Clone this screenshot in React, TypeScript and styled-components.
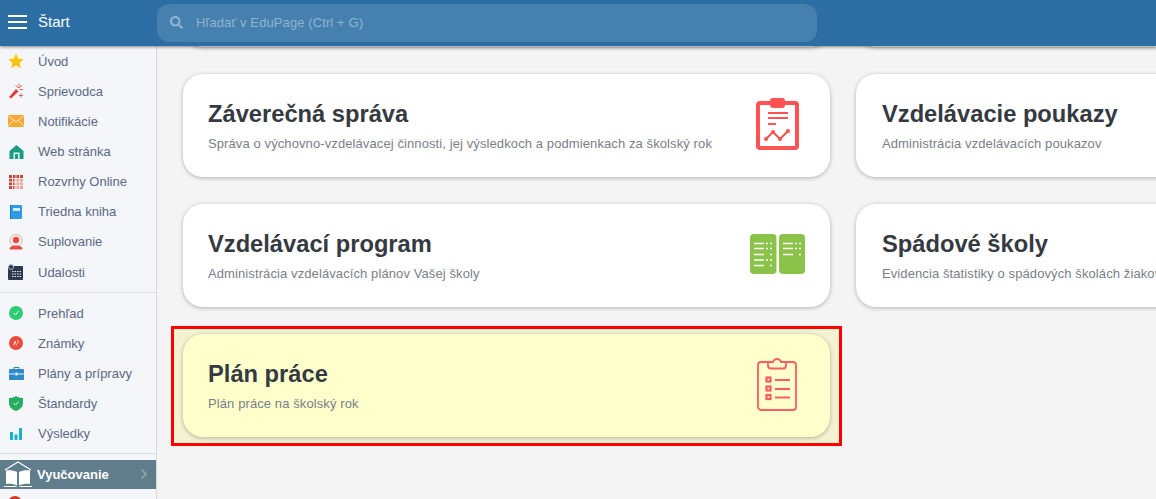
import React from "react";
import styled, { createGlobalStyle } from "styled-components";
import { FaSearch, FaChevronRight } from "react-icons/fa";

const GlobalStyle = createGlobalStyle`
  html, body {
    margin: 0;
    height: 100%;
    overflow: hidden;
    background: #f4f4f4;
    font-family: "Liberation Sans", Arial, sans-serif;
  }
`;

const Page = styled.div`
  width: 1156px;
  height: 499px;
  display: flex;
  flex-direction: column;
  overflow: hidden;
`;

const Header = styled.header`
  height: 46px;
  flex: none;
  display: flex;
  align-items: center;
  background: #2c6ea3;
  box-shadow: 0 1px 3px rgba(0, 0, 0, 0.45);
  position: relative;
  z-index: 3;
`;

const Brand = styled.div`
  width: 157px;
  flex: none;
  display: flex;
  align-items: center;
  gap: 11px;
  padding: 0 0 3px 8px;
  box-sizing: border-box;
  color: #fff;
  font-size: 15px;
`;

const Burger = styled.div`
  width: 19px;
  height: 14px;
  display: flex;
  flex-direction: column;
  justify-content: space-between;
  span {
    display: block;
    height: 2px;
    background: #fff;
  }
`;

const Search = styled.div`
  width: 660px;
  height: 38px;
  display: flex;
  align-items: center;
  gap: 13px;
  padding: 0 0 2px 13px;
  box-sizing: border-box;
  background: #4580ae;
  border-radius: 12px;
  color: #8fb5d2;
  font-size: 13px;
  letter-spacing: 0.1px;
`;

const Body = styled.div`
  flex: 1;
  min-height: 0;
  display: flex;
`;

const Sidebar = styled.nav`
  width: 157px;
  flex: none;
  box-sizing: border-box;
  background: #f5f6f9;
  border-right: 1px solid #d8d8d8;
  overflow: hidden;
`;

const NavItem = styled.div`
  height: 30.15px;
  display: flex;
  align-items: center;
  color: #5b6885;
  font-size: 13px;
`;

const NavIcon = styled.span`
  width: 38px;
  flex: none;
  display: flex;
  justify-content: center;
  padding-right: 6px;
  box-sizing: border-box;
  svg {
    display: block;
  }
`;

const Divider = styled.div`
  height: 1px;
  margin: 4.5px 0 5.5px;
  background: #dcdee2;
`;

const ActiveItem = styled.div`
  height: 29px;
  display: flex;
  align-items: center;
  background: #607d8b;
  color: #fff;
  font-size: 13px;
  font-weight: 700;
  svg.book {
    flex: none;
    margin: 0 4px 0 3px;
  }
  svg.chevron {
    margin-left: auto;
    margin-right: 6px;
    color: #8aa0ab;
  }
`;

const PeekDot = styled.div`
  width: 14px;
  height: 14px;
  margin: 7px 0 0 8px;
  border-radius: 50%;
  background: #d9342b;
`;

const Main = styled.main`
  flex: 1;
  min-width: 0;
  overflow: hidden;
`;

const CardGrid = styled.div`
  position: relative;
  z-index: 0;
  width: 1320px;
  margin: -102px 0 0 26px;
  display: grid;
  grid-template-columns: 647px 647px;
  grid-auto-rows: 103px;
  column-gap: 26px;
  row-gap: 27px;
`;

const Card = styled.div<{ $highlight?: boolean }>`
  position: relative;
  display: flex;
  align-items: center;
  justify-content: space-between;
  padding: 0 23px 0 25px;
  box-sizing: border-box;
  border-radius: 20px;
  background: ${(p) => (p.$highlight ? "#ffffcc" : "#fff")};
  box-shadow: 0 1px 4px rgba(0, 0, 0, 0.28);
  &:nth-child(even) {
    padding-left: 26px;
  }
  ${(p) =>
    p.$highlight &&
    `
    &::before {
      content: "";
      position: absolute;
      left: -12px;
      right: -12px;
      top: -8px;
      bottom: -9px;
      border: 3px solid #f00;
      background: #f3f3d2;
      z-index: -1;
    }
  `}
`;

const CardText = styled.div`
  display: flex;
  flex-direction: column;
  gap: 8px;
  min-width: 0;
  white-space: nowrap;
`;

const CardTitle = styled.div`
  color: #353a42;
  font-size: 23.7px;
  line-height: 28px;
  font-weight: 700;
`;

const CardDesc = styled.div`
  color: #7a8089;
  font-size: 13px;
  letter-spacing: 0.1px;
  line-height: 16px;
`;

const CardIcon = styled.div`
  width: 60px;
  flex: none;
  margin-top: -3px;
  display: flex;
  justify-content: center;
  svg {
    display: block;
  }
`;

const Star = () => (
  <svg width="16" height="16" viewBox="0 0 16 16"><path d="M8 .6l2.3 4.9 5.3.7-3.900 3.700 1 5.300L8 12.600l-4.700 2.600 1-5.300L.4 6.200l5.300-.7z" fill="#f8c513" /></svg>
);
const Wand = () => (
  <svg width="16" height="16" viewBox="0 0 16 16"><path d="M1 14l7-8 2.500 2.500L3 15.500z" fill="#e0403c" /><path d="M11 .5v3M7.500 2.500L11 5l3-3M15 6.500h-3.500M13 10.500v4M11 12.500h4" stroke="#e0605c" strokeWidth="1" fill="none" /></svg>
);
const Mail = () => (
  <svg width="16" height="12" viewBox="0 0 16 12"><rect width="16" height="12" fill="#f7a834" /><path d="M0 .5L8 7l8-6.500M0 11.500L5.500 5.500M16 11.500L10.500 5.500" stroke="#fdeccf" strokeWidth="1" fill="none" /></svg>
);
const Home = () => (
  <svg width="15" height="15" viewBox="0 0 15 15"><path d="M7.500 1L14.500 7V15H0.500V7z" fill="#1a9c83" /><rect x="4.500" y="8.500" width="6" height="6.500" fill="#eaf6f3" /><rect x="6" y="10" width="3" height="5" fill="#1a9c83" /></svg>
);
const Timetable = () => (
  <svg width="14" height="14" viewBox="0 0 14 14"><rect width="14" height="14" fill="#e8a9a3" /><rect width="5" height="14" fill="#c8453c" /><rect width="14" height="3" fill="#c8453c" /><path d="M0 3.500h14M0 7h14M0 10.500h14M3.500 0v14M7 0v14M10.500 0v14" stroke="#f7e4e2" strokeWidth="1" /></svg>
);
const Notebook = () => (
  <svg width="12" height="14" viewBox="0 0 12 14"><rect width="12" height="14" rx="1" fill="#2e9be6" /><rect x="3" y="3" width="7" height="3" fill="#d3ebfb" /><rect width="1" height="14" fill="#1c78b8" /></svg>
);
const Person = () => (
  <svg width="16" height="16" viewBox="0 0 16 16"><circle cx="8" cy="6.500" r="6" fill="none" stroke="#f0a89f" strokeWidth="1" /><circle cx="8" cy="6" r="3.200" fill="#ea4c3c" /><path d="M1.500 15.500c0-3 3-4 6.500-4s6.500 1 6.500 4z" fill="#ea4c3c" /></svg>
);
const Calendar = () => (
  <svg width="16" height="16" viewBox="0 0 16 16"><rect y="2" width="15" height="14" rx="1" fill="#2b3a4e" /><path d="M4 7.500h9M4 10h9M4 12.500h9" stroke="#e5e9ee" strokeWidth="1.200" strokeDasharray="1.500 1" /><circle cx="3" cy="3" r="2.500" fill="#2b3a4e" stroke="#c5ccd6" strokeWidth=".8" /></svg>
);
const Check = () => (
  <svg width="14" height="14" viewBox="0 0 14 14"><circle cx="7" cy="7" r="7" fill="#2ecc71" /><path d="M4.500 7l2 2 3-4" stroke="#e8f9ef" strokeWidth="1" fill="none" /></svg>
);
const Grades = () => (
  <svg width="14" height="14" viewBox="0 0 14 14"><circle cx="7" cy="7" r="7" fill="#ea4c3c" /><path d="M4.500 9.500L6 5l1.500 4.500M9 4.500v3" stroke="#fbd5d0" strokeWidth="1" fill="none" /></svg>
);
const Briefcase = () => (
  <svg width="15" height="13" viewBox="0 0 15 13"><path d="M5 2V.500h5V2" stroke="#2980b9" fill="none" /><rect y="2" width="15" height="11" rx="1" fill="#2d8ac7" /><rect y="6.500" width="15" height="1" fill="#e8f2f9" /><rect x="6.500" y="5.500" width="2" height="3" fill="#e8f2f9" /></svg>
);
const Shield = () => (
  <svg width="14" height="15" viewBox="0 0 14 15"><path d="M7 0c2 1.500 4 2 7 2v5c0 4-3 6.500-7 8-4-1.500-7-4-7-8V2c3 0 5-.5 7-2z" fill="#27ae60" /><path d="M4.500 7l2 2 3-3.500" stroke="#dff5e8" strokeWidth="1" fill="none" /></svg>
);
const Bars = () => (
  <svg width="12" height="12" viewBox="0 0 12 12"><rect y="4" width="3" height="8" fill="#17b3cf" /><rect x="4.500" y="6.500" width="3" height="5.500" fill="#17b3cf" /><rect x="9" width="3" height="12" fill="#17b3cf" /></svg>
);
const OpenBook = () => (
  <svg className="book" width="30" height="27" viewBox="0 0 30 27"><path d="M2 9L15 1l13 8" fill="none" stroke="#fff" strokeWidth="1.200" /><path d="M14 11c-3-1.500-7-2-11-1.500V23c4-.5 8 0 11 1.500zM16 11c3-1.500 7-2 11-1.500V23c-4-.5-8 0-11 1.500z" fill="#fff" /><path d="M1 25.500h12.500M16.500 25.500H29" stroke="#fff" strokeWidth="1.200" /></svg>
);

const ReportIcon = () => (
  <svg width="43" height="52" viewBox="0 0 43 52">
    <rect x="2" y="5" width="39" height="45" rx="2" fill="#fff" stroke="#ff5252" strokeWidth="4" />
    <rect x="14" y="0" width="15" height="10" rx="3" fill="#ff5252" />
    <path d="M12 15h20M12 20h20M12 26h8" stroke="#ff5252" strokeWidth="1.800" />
    <path d="M10 41l7-7 7 7 8-8" stroke="#ff5252" strokeWidth="2" fill="none" />
    <circle cx="10" cy="41" r="2" fill="#ff5252" />
    <circle cx="17" cy="34" r="2" fill="#ff5252" />
    <circle cx="24" cy="41" r="2" fill="#ff5252" />
    <circle cx="32" cy="33" r="2" fill="#ff5252" />
  </svg>
);

const BookIcon = () => (
  <svg width="55" height="40" viewBox="0 0 55 40">
    <rect width="26.500" height="40" rx="4" fill="#8bc34a" />
    <rect x="29" width="26" height="40" rx="4" fill="#8bc34a" />
    <path d="M4 9.500h10M4 14.500h10M4 20.500h10M4 26h10M4 31.500h10M33 9.500h10M33 14.500h10M33 20.500h10" stroke="#fff" strokeWidth="1.500" />
    <path d="M16 9.500h2M20 9.500h2M16 14.500h2M20 14.500h2M20 20.500h2M16 26h2M20 26h2M20 31.500h2M45 9.500h2M49 9.500h2M45 14.500h2M49 14.500h2M49 20.500h2" stroke="#fff" strokeWidth="1.500" />
  </svg>
);

const ChecklistIcon = () => (
  <svg width="40" height="53" viewBox="0 0 40 53" fill="none" stroke="#ff5a66" strokeWidth="1.800">
    <rect x="1" y="4" width="38" height="48" rx="3" />
    <path d="M11 4v3.500a3 3 0 0 0 3 3h12a3 3 0 0 0 3-3V4h-5c0-1.500-2-3-4-3s-4 1.500-4 3z" fill="#ffffcc" />
    <rect x="9.500" y="19.500" width="4" height="4" strokeWidth="2.200" />
    <rect x="9.500" y="28.500" width="4" height="4" strokeWidth="2.200" />
    <rect x="9.500" y="37" width="4" height="4" strokeWidth="2.200" />
    <path d="M18 22h15M18 31h15M18 39.500h15" />
  </svg>
);

const topItems: [React.ReactNode, string][] = [
  [<Star />, "Úvod"],
  [<Wand />, "Sprievodca"],
  [<Mail />, "Notifikácie"],
  [<Home />, "Web stránka"],
  [<Timetable />, "Rozvrhy Online"],
  [<Notebook />, "Triedna kniha"],
  [<Person />, "Suplovanie"],
  [<Calendar />, "Udalosti"],
];

const lowerItems: [React.ReactNode, string][] = [
  [<Check />, "Prehľad"],
  [<Grades />, "Známky"],
  [<Briefcase />, "Plány a prípravy"],
  [<Shield />, "Štandardy"],
  [<Bars />, "Výsledky"],
];

export default function App() {
  return (
    <Page>
      <GlobalStyle />
      <Header>
        <Brand>
          <Burger><span /><span /><span /></Burger>
          Štart
        </Brand>
        <Search>
          <FaSearch size={13} color="#8fb5d2" />
          Hľadať v EduPage (Ctrl + G)
        </Search>
      </Header>
      <Body>
        <Sidebar>
          {topItems.map(([icon, label]) => (
            <NavItem key={label}><NavIcon>{icon}</NavIcon>{label}</NavItem>
          ))}
          <Divider />
          {lowerItems.map(([icon, label]) => (
            <NavItem key={label}><NavIcon>{icon}</NavIcon>{label}</NavItem>
          ))}
          <Divider />
          <ActiveItem>
            <OpenBook />
            Vyučovanie
            <FaChevronRight className="chevron" size={12} />
          </ActiveItem>
          <PeekDot />
        </Sidebar>
        <Main>
          <CardGrid>
            <Card />
            <Card />
            <Card>
              <CardText>
                <CardTitle>Záverečná správa</CardTitle>
                <CardDesc>Správa o výchovno-vzdelávacej činnosti, jej výsledkoch a podmienkach za školský rok</CardDesc>
              </CardText>
              <CardIcon><ReportIcon /></CardIcon>
            </Card>
            <Card>
              <CardText>
                <CardTitle>Vzdelávacie poukazy</CardTitle>
                <CardDesc>Administrácia vzdelávacích poukazov</CardDesc>
              </CardText>
            </Card>
            <Card>
              <CardText>
                <CardTitle>Vzdelávací program</CardTitle>
                <CardDesc>Administrácia vzdelávacích plánov Vašej školy</CardDesc>
              </CardText>
              <CardIcon><BookIcon /></CardIcon>
            </Card>
            <Card>
              <CardText>
                <CardTitle>Spádové školy</CardTitle>
                <CardDesc>Evidencia štatistiky o spádových školách žiakov</CardDesc>
              </CardText>
            </Card>
            <Card $highlight>
              <CardText>
                <CardTitle>Plán práce</CardTitle>
                <CardDesc>Plán práce na školský rok</CardDesc>
              </CardText>
              <CardIcon><ChecklistIcon /></CardIcon>
            </Card>
          </CardGrid>
        </Main>
      </Body>
    </Page>
  );
}
